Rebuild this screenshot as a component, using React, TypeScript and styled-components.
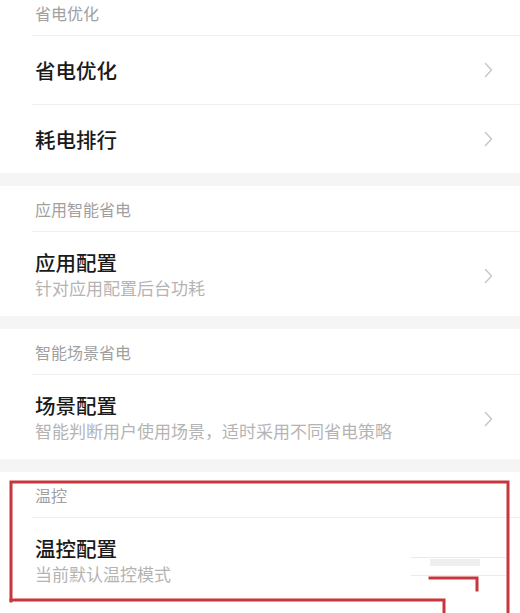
import styled, { createGlobalStyle } from "styled-components";

const GlobalStyle = createGlobalStyle`
  html, body {
    margin: 0;
    padding: 0;
    background: #f5f5f5;
  }
  body {
    font-family: "Noto Sans CJK SC", "Noto Sans", sans-serif;
    overflow: hidden;
  }
`;

type Item = { title: string; desc?: string };
type Section = { header: string; items: Item[] };

const sections: Section[] = [
  {
    header: "省电优化",
    items: [{ title: "省电优化" }, { title: "耗电排行" }],
  },
  {
    header: "应用智能省电",
    items: [{ title: "应用配置", desc: "针对应用配置后台功耗" }],
  },
  {
    header: "智能场景省电",
    items: [{ title: "场景配置", desc: "智能判断用户使用场景，适时采用不同省电策略" }],
  },
  {
    header: "温控",
    items: [{ title: "温控配置", desc: "当前默认温控模式" }],
  },
];

const Chevron = () => (
  <svg width="9" height="16" viewBox="0 0 9 16" fill="none">
    <polyline
      points="1.5,1.5 7.5,8 1.5,14.5"
      stroke="#c6c6c6"
      strokeWidth="1.4"
      strokeLinecap="round"
      strokeLinejoin="round"
    />
  </svg>
);

// red marker strokes drawn over the screenshot
const Markup = () => (
  <MarkupSvg width="520" height="613" viewBox="0 0 520 613">
    <line x1="411" y1="557.5" x2="506" y2="557.5" stroke="#ebebeb" strokeWidth="1" />
    <line x1="411" y1="575.5" x2="506" y2="575.5" stroke="#ebebeb" strokeWidth="1" />
    <rect x="430" y="559" width="50" height="7" fill="#efefef" />
    <g stroke="#c8363d" strokeWidth="3" fill="none" strokeLinecap="square">
      <polyline points="11,601 11,482 508,482 508,615" />
      <polyline points="11,600 444,600 444,615" />
      <polyline points="430,578 477,578 477,590" />
    </g>
  </MarkupSvg>
);

const App = () => {
  return (
    <>
      <GlobalStyle />
      <StyledPage>
        <SectionList>
          {sections.map((section) => (
            <StyledSection key={section.header}>
              <SectionHeader>{section.header}</SectionHeader>
              {section.items.map((item) => (
                <Row key={item.title} $tall={!!item.desc}>
                  <RowText>
                    <RowTitle>{item.title}</RowTitle>
                    {item.desc && <RowDesc>{item.desc}</RowDesc>}
                  </RowText>
                  {item.title !== "温控配置" && <Chevron />}
                </Row>
              ))}
            </StyledSection>
          ))}
        </SectionList>
        <Markup />
      </StyledPage>
    </>
  );
};

const StyledPage = styled.div`
  position: relative;
  width: 520px;
  height: 613px;
  overflow: hidden;
  background: #f5f5f5;
`;

const SectionList = styled.div`
  display: flex;
  flex-direction: column;
  gap: 13px;
  margin-top: -10px;
  height: 623px;
`;

const MarkupSvg = styled.svg`
  position: absolute;
  left: 0;
  top: 0;
  pointer-events: none;
`;

const StyledSection = styled.section`
  background: #ffffff;
  flex-shrink: 0;

  &:last-child {
    flex-grow: 1;
  }
`;

const SectionHeader = styled.div`
  height: 45px;
  display: flex;
  align-items: center;
  padding-left: 35px;
  font-size: 16px;
  color: #a0a0a0;
`;

const Row = styled.div<{ $tall: boolean }>`
  height: ${(p) => (p.$tall ? "85px" : "69px")};
  margin-left: 32px;
  padding-right: 27px;
  border-top: 1px solid #efefef;
  box-sizing: border-box;
  display: flex;
  align-items: ${(p) => (p.$tall ? "flex-start" : "center")};
  padding-top: ${(p) => (p.$tall ? "17px" : "0")};
  justify-content: space-between;

  svg {
    flex-shrink: 0;
    margin-top: ${(p) => (p.$tall ? "19px" : "0")};
  }
`;

const RowText = styled.div`
  display: flex;
  flex-direction: column;
  padding-left: 3px;
`;

const RowTitle = styled.div`
  font-size: 20.5px;
  line-height: 27px;
  font-weight: 500;
  color: #1a1a1a;
`;

const RowDesc = styled.div`
  font-size: 17px;
  line-height: 24px;
  color: #b4b4b4;
`;

export default App;
